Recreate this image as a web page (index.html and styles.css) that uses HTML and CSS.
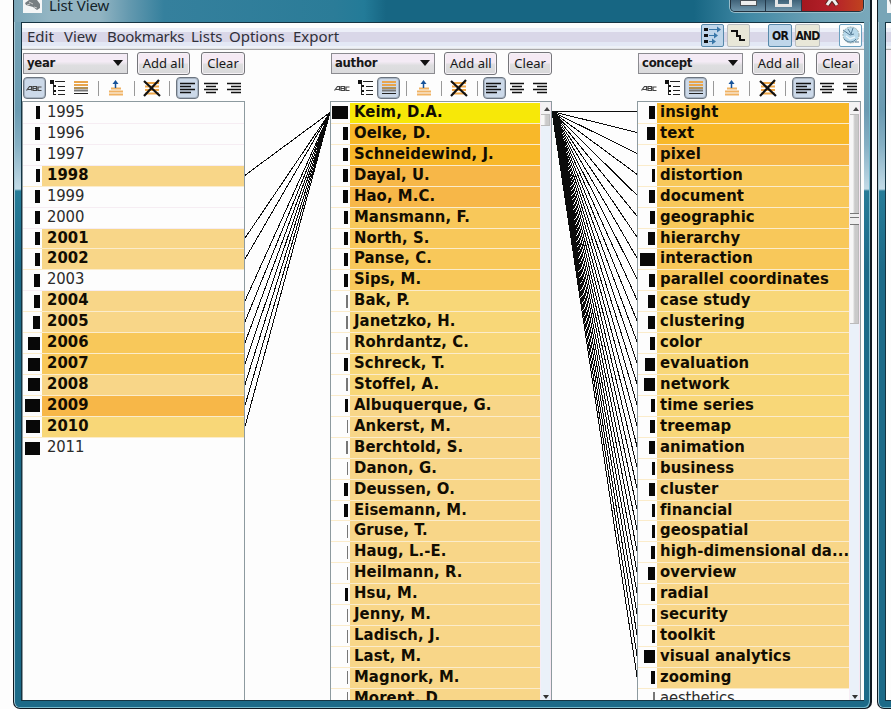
FILE: index.html
```html
<!DOCTYPE html>
<html lang="en">
<head>
<meta charset="utf-8">
<title>List View</title>
<link rel="stylesheet" href="styles.css">
</head>
<body>
<svg class="defs" width="0" height="0">
  <symbol id="i-abc" viewBox="0 0 22 21"><path d="M2.500 12.500L5.500 8.500h2v4M4 11.500h3M9 8.500h3.500v4H9zM9 10.500h3M17.500 9H14v3.500h3.500" fill="none" stroke="#444" stroke-width="1.200"/></symbol>
  <symbol id="i-tree" viewBox="0 0 22 21"><path d="M3 2h4v4H3zM6 7h3v2H6zM6 12h3v2H6zM6 16h3v1H6z" fill="#111"/><path d="M8 3.500h10M11 8.500h7M11 12.500h7M11 16.500h7M6.500 6v11" stroke="#222" fill="none"/></symbol>
  <symbol id="i-grad" viewBox="0 0 22 21"><path d="M4 4h14M4 7h14" stroke="#e9a54b" stroke-width="2"/><path d="M4 10h14" stroke="#b39156" stroke-width="2"/><path d="M4 12.500h14" stroke="#777" stroke-width="2"/><path d="M4 15.500h14" stroke="#222"/></symbol>
  <symbol id="i-up" viewBox="0 0 22 21"><path d="M6 10.500h10M4 13.500h14M4 16.500h14" stroke="#f0b263" stroke-width="2"/><path d="M10.500 10V4" stroke="#17539a" stroke-width="1.500"/><path d="M7.500 6l3-4 3 4z" fill="#17539a"/></symbol>
  <symbol id="i-del" viewBox="0 0 22 21"><path d="M4 5h14M4 8.500h14M4 12h14M4 15.500h14" stroke="#efa84a" stroke-width="2"/><path d="M3 3l16 15M18 2L3 18" stroke="#111" stroke-width="2.200"/></symbol>
  <symbol id="i-left" viewBox="0 0 22 21"><path d="M3 5.500h15M3 8.500h11M3 11.500h15M3 14.500h11" stroke="#111" stroke-width="1.500"/></symbol>
  <symbol id="i-center" viewBox="0 0 22 21"><path d="M4 5.500h14M6 8.500h10M4 11.500h14M6 14.500h10" stroke="#111" stroke-width="1.500"/></symbol>
  <symbol id="i-right" viewBox="0 0 22 21"><path d="M4 5.500h14M8 8.500h10M4 11.500h14M8 14.500h10" stroke="#111" stroke-width="1.500"/></symbol>
</svg>
<div class="desktop">
  <section class="window">
    <header class="titlebar">
      <svg class="appicon" width="19" height="13" viewBox="0 0 19 13"><path d="M0 0h19v13H0z" fill="#f4f6f7"/><path d="M2 3l4-3h8l3 4v4l-3 2-4-3-7-2z" fill="#777e82"/><path d="M6 2l4 2M11 7l3 1M4 5l3-1" stroke="#ccc"/></svg>
      <span class="title">List View</span>
      <div class="controls">
        <span class="ctl"><i class="min"></i></span><span class="ctl"><i class="max"></i></span>
        <span class="ctl close"><svg width="18" height="8" viewBox="0 0 18 8"><path d="M9-2L4 5M9-2l5 7" stroke="#5c2520" stroke-width="5"/><path d="M9-2L4 5M9-2l5 7" stroke="#eee" stroke-width="3"/></svg></span>
      </div>
    </header>
    <main class="client">
      <nav class="menubar">
        <span class="m1">Edit</span><span class="m2">View</span><span class="m3">Bookmarks</span><span class="m4">Lists</span><span class="m5">Options</span><span class="m6">Export</span>
        <div class="modes">
          <span class="mode on"><svg width="21" height="21" viewBox="0 0 21 21"><path d="M2 3h4v3H2zM2 9h4v3H2zM2 15h4v3H2z" fill="#111"/><path d="M7 4.500h10M7 10.500h8M7 16.500h5" stroke="#3977a8"/><path d="M15 1.500l4 3-4 3zM12 7.500l4 3-4 3zM10 13.500l4 3-4 3z" fill="#3977a8"/></svg></span>
          <span class="mode m-step"><svg width="21" height="21" viewBox="0 0 21 21"><path d="M3 6h6v5h3v4h5" fill="none" stroke="#111" stroke-width="2"/></svg></span>
          <span class="mode on m-or">OR</span>
          <span class="mode m-and">AND</span>
          <span class="mode m-globe"><svg width="21" height="21" viewBox="0 0 21 21"><circle cx="11" cy="10" r="8" fill="#b8d9eb" stroke="#9aa" stroke-dasharray="2 1"/><path d="M3 5l7 5 4-1M8 4l3 5 2-6M4 14c4 4 9 4 12 0M15 17h4" fill="none" stroke="#567b95"/><path d="M6 11l4 3 5-2" stroke="#e8f4fa" fill="none" stroke-width="1.500"/></svg></span>
        </div>
      </nav>
      <div class="lists" id="lists"></div>
    </main>
  </section>
  <section class="window second">
    <header class="titlebar"><svg class="appicon" width="12" height="13"><path d="M0 0h12v13H0z" fill="#f4f6f7"/><path d="M2 0h10v8L4 5z" fill="#777"/></svg></header>
    <main class="client"><nav class="menubar"></nav><div class="pink"></div></main>
  </section>
</div>
<script src="app.js"></script>
</body>
</html>
```
FILE: styles.css
```css
* { box-sizing: border-box; }
body { margin: 0; background: #fdfdfd; font-family: "Noto Sans", sans-serif; color: #181818; overflow: hidden; }
.defs { display: block; }
.desktop { display: flex; width: 891px; height: 709px; padding-left: 13px; gap: 5px; overflow: hidden; }
.window {
  flex: none; width: 859px; height: 709px; display: flex; flex-direction: column;
  border: solid #101820; border-width: 0 2px 1px 1px; border-radius: 0 0 7px 7px;
  padding: 0 6px 7px 7px;
  background: linear-gradient(#78a5b7 0, #6b9bb2 110px, #86b0c4 145px, #c3dbe7 189px, #267c98 191px, #1c6a88 270px, #1c6a88 100%);
  box-shadow: inset 1px 0 #a9c9d5, inset -1px -1px #75b7c9;
}
.titlebar {
  flex: none; height: 22px; margin: 0 -6px 0 -7px; padding-left: 9px; display: flex; align-items: flex-start;
  background: linear-gradient(90deg, #7ba6b8 0, #93b5c3 35px, #93b5c3 85px, #6499af 115px, #35809d 150px, #2b7c98 320px, #237b98 350px, #176683 372px, #176683 680px, #4189a5 735px, #6a9fb4 800px, #79a8ba);
}
.title { font-size: 15px; line-height: 20px; margin: -5px 0 0 7px; color: #14232a; letter-spacing: -.1px; }
.controls { display: flex; margin-left: auto; margin-right: 6px; height: 12px; width: 134px; border: 1px solid #22313d; border-top: 0; border-radius: 0 0 5px 5px; overflow: hidden; box-shadow: 0 0 0 1px #99bdca; }
.ctl { width: 36px; height: 12px; border-right: 1px solid #24394a; background: linear-gradient(#3f6278, #759bb0); display: flex; justify-content: center; }
.ctl.close { width: 62px; border: 0; background: linear-gradient(90deg, #a3181f, #b5202a 50%, #c0431f); }
.min { width: 17px; height: 6px; border: 1px solid #4b5258; background: #eee; }
.max { width: 17px; height: 7px; border: 3px solid #e5e5e5; border-top: 0; }
.client { flex: 1; min-height: 0; background: #fdfdfd; border: solid #153442; border-width: 1px 0 1px 1px; overflow: hidden; display: flex; flex-direction: column; }
.menubar {
  flex: none; height: 27px; display: flex; align-items: center; padding: 0 1px 3px 5px; font-size: 15px; border-bottom: 1px solid #a8a8a8;
  background: linear-gradient(#fdfdfd 0 5px, #eceff8 5px 9px, #d9d7e8 9px 19px, #e3e8f5 19px 23px, #edf1f7 23px 25px, #d6d6d6);
}
.m1 { width: 37px; } .m2 { width: 43px; } .m3 { width: 84px; } .m4 { width: 38px; } .m5 { width: 64px; }
.menubar > span { white-space: nowrap; color: #30303a; line-height: 20px; padding-top: 2px; }
.menubar > .m3 { letter-spacing: -.3px; }
.modes { display: flex; margin-left: auto; height: 23px; margin-top: 2px; }
.mode { width: 23px; height: 23px; border: 1px solid #b9bdc0; background: #e8e7d8; display: flex; align-items: center; justify-content: center; font: bold 12px "DejaVu Sans Condensed", sans-serif; letter-spacing: -.8px; color: #111; border-radius: 2px; }
.mode.on { background: #bfd6ea; border: 1px solid #5789aa; }
.m-step { margin-left: 3px; } .m-or { margin-left: 18px; width: 24px; } .m-and { margin-left: 3px; width: 25px; } .m-globe { margin-left: 19px; margin-right: 1px; background: #fafcfd; border-color: #6aa0bf; }
.lists { flex: 1; min-height: 0; display: grid; grid-template-columns: 223px 85px 222px 85px 224px; }
.col { display: flex; flex-direction: column; min-height: 0; }
.bar1 { flex: none; height: 26px; display: flex; align-items: center; padding-left: 1px; }
.combo { width: 105px; height: 21px; border: 1px solid #8b8b90; background: linear-gradient(#f4ebf5 40%, #dedee0 60%, #dadadc); font: bold 13px "DejaVu Sans Condensed", sans-serif; display: flex; align-items: center; justify-content: space-between; padding: 0 4px 1px 3px; letter-spacing: -.3px; }
.combo i { border: 5px solid transparent; border-top: 6px solid #111; border-bottom: 0; }
.btn { height: 23px; width: 53px; margin-left: 9px; border: 1px solid #75757a; border-radius: 3px; background: linear-gradient(#f5eaf4 45%, #dededf 55%, #d8d8da); box-shadow: inset 0 0 0 1px #f6f2f6; font-size: 13px; line-height: 20px; text-align: center; white-space: nowrap; }
.btn.clear { width: 44px; margin-left: 11px; }
.bar2 { flex: none; height: 25px; display: flex; align-items: center; padding: 0 0 1px 1px; }
.tool { flex: none; width: 23px; height: 22px; border: 1px solid transparent; border-radius: 4px; display: flex; align-items: center; justify-content: center; }
.tool svg { width: 22px; height: 21px; flex: none; }
.tool.on { background: #ccd9e9; border: 1px solid #6c7580; box-shadow: inset 0 0 0 1px #a9b5c3; }
.sep { width: 1px; height: 15px; background: #999; margin: 0 6px; }
.list { flex: 1; min-height: 0; border: 1px solid #8d9a9f; border-bottom: 0; display: flex; overflow: hidden; }
.rows { flex: 1; min-width: 0; padding-top: 1px; overflow: hidden; }
.row { height: 20.930px; display: flex; align-items: stretch; border-bottom: 1px solid #f6edf3; }
.year .row:last-child { border-bottom: 0; }
.gutter { flex: none; width: 17px; display: flex; justify-content: flex-end; align-items: center; margin-right: 2px; }
.gutter i { height: 13px; background: #080808; }
.gutter .thin { background: #777; }
.cell { flex: 1; min-width: 0; padding-left: 5px; font: 16.500px/17px "DejaVu Sans Condensed", sans-serif; white-space: nowrap; overflow: hidden; color: #2b2b2b; letter-spacing: -.15px; }
.author .cell { padding-left: 4px; } .concept .cell { padding-left: 3px; }
.cell.sel { font-weight: bold; color: #120d02; letter-spacing: .08px; }
.row:has(.sel) { border-bottom-color: #fbeccb; }
.y { background: #f7e808; } .a { background: #f8b829; } .b { background: #f7b748; } .c { background: #f8c85a; } .d { background: #f8d778; } .e { background: #f8d688; }
.scroll { flex: none; width: 11px; display: flex; flex-direction: column; justify-content: space-between; align-items: center; background: #eaf1f9; border-left: 1px solid #f7edf5; border-right: 1px solid #f6e7f2; }
.scroll .up { width: 100%; height: 12px; background: #f3f3f3; }
.scroll .thumb { width: 9px; height: 12px; border: 1px solid #bbb; border-left: 0; background: linear-gradient(90deg, #f7f7f7 35%, #cacaca 60%); }
.concept .scroll .thumb { height: 210px; display: flex; align-items: center; margin-bottom: auto; }
.author .scroll .thumb { margin-bottom: auto; }
.concept .thumb::after { content: ""; width: 9px; flex: none; height: 10px; border: solid #777; border-width: 1px 0; background: linear-gradient(#eee 3px, #777 3px 4px, #eee 4px); }
.up::after { content: ""; display: block; margin: 5px 0 0 3px; border: 3px solid transparent; border-bottom: 4px solid #444; border-top: 0; width: 0; }
.down { border: 3px solid transparent; border-top: 4px solid #333; border-bottom: 0; margin-bottom: 1px; }
.links { padding-top: 51px; overflow: hidden; }
.links svg { display: block; shape-rendering: crispEdges; }
.links path { stroke: #0c0c0c; stroke-width: 1; fill: none; }
.second { width: 40px; }
.second .titlebar { padding-left: 9px; background: #78a5b7; }
.pink { flex: 1; background: linear-gradient(#faeef7, #fdfafd 54px, #fdfdfd 55px); }
```
FILE: app.js
```js
const PITCH = 20.93;

// Rows are [label, frequency bar width, highlight level]; an empty level is an unselected row.
const data = {
  year: [["1995",4,""],["1996",5,""],["1997",4,""],["1998",4,"e"],["1999",5,""],["2000",5,""],["2001",5,"e"],["2002",5,"e"],["2003",6,""],["2004",6,"e"],["2005",7,"e"],["2006",12,"c"],["2007",12,"c"],["2008",12,"e"],["2009",15,"b"],["2010",14,"d"],["2011",15,""]],
  author: [["Keim, D.A.",16,"y"],["Oelke, D.",5,"a"],["Schneidewind, J.",5,"a"],["Dayal, U.",5,"b"],["Hao, M.C.",5,"b"],["Mansmann, F.",4,"c"],["North, S.",4,"c"],["Panse, C.",4,"c"],["Sips, M.",4,"c"],["Bak, P.",2,"d"],["Janetzko, H.",2,"d"],["Rohrdantz, C.",2,"d"],["Schreck, T.",4,"d"],["Stoffel, A.",2,"d"],["Albuquerque, G.",3,"e"],["Ankerst, M.",1,"e"],["Berchtold, S.",2,"e"],["Danon, G.",1,"e"],["Deussen, O.",4,"e"],["Eisemann, M.",4,"e"],["Gruse, T.",1,"e"],["Haug, L.-E.",1,"e"],["Heilmann, R.",1,"e"],["Hsu, M.",3,"e"],["Jenny, M.",1,"e"],["Ladisch, J.",1,"e"],["Last, M.",1,"e"],["Magnork, M.",1,"e"],["Morent, D.",1,"e"]],
  concept: [["insight",6,"a"],["text",8,"a"],["pixel",4,"b"],["distortion",3,"c"],["document",6,"c"],["geographic",5,"c"],["hierarchy",7,"c"],["interaction",15,"c"],["parallel coordinates",6,"c"],["case study",7,"d"],["clustering",7,"d"],["color",5,"d"],["evaluation",10,"d"],["network",11,"d"],["time series",4,"d"],["treemap",5,"d"],["animation",6,"e"],["business",3,"e"],["cluster",6,"e"],["financial",3,"e"],["geospatial",3,"e"],["high-dimensional da...",4,"e"],["overview",7,"e"],["radial",4,"e"],["security",3,"e"],["toolkit",3,"e"],["visual analytics",11,"e"],["zooming",4,"e"],["aesthetics",2,""]]
};

const tool = (id, on) => `<span class="tool${on ? " on" : ""}"><svg><use href="#i-${id}"/></svg></span>`;

function column(name) {
  const scroll = name === "year" ? "" : '<div class="scroll"><i class="up"></i><i class="thumb"></i><i class="down"></i></div>';
  const rows = data[name].map(([label, w, level]) =>
    `<div class="row"><span class="gutter"><i class="${w < 3 ? "thin" : ""}" style="width:${w}px"></i></span><span class="cell ${level ? "sel " + level : ""}">${label}</span></div>`).join("");
  return `<div class="col ${name}">
    <div class="bar1"><span class="combo">${name}<i></i></span><span class="btn">Add all</span><span class="btn clear">Clear</span></div>
    <div class="bar2">${tool("abc", name === "year")}${tool("tree")}${tool("grad", name !== "year")}<i class="sep"></i>${tool("up")}<i class="sep"></i>${tool("del")}<i class="sep"></i>${tool("left", true)}${tool("center")}${tool("right")}</div>
    <div class="list"><div class="rows">${rows}</div>${scroll}</div></div>`;
}

function links(rows, toRight) {
  const d = rows.map(([, , level], i) => {
    const y = 11.5 + i * PITCH;
    return level ? (toRight ? `M0 10.5L85 ${y - 1}` : `M0 ${y}L85 11.5`) : "";
  }).join("");
  return `<div class="links"><svg width="85" height="600"><path d="${d}"/></svg></div>`;
}

document.getElementById("lists").innerHTML =
  column("year") + links(data.year, false) + column("author") + links(data.concept, true) + column("concept");
```
